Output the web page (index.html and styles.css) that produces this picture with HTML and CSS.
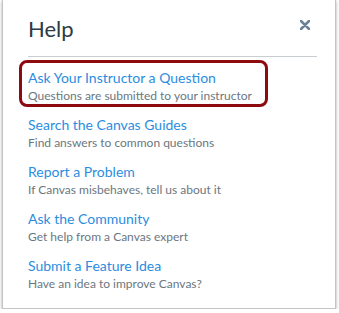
FILE: index.html
```html
<!DOCTYPE html>
<html lang="en">
<head>
    <meta charset="UTF-8">
    <title>Help</title>
    <link rel="stylesheet" href="styles.css">
</head>
<body>
    <div class="tray">
        <div class="tray-header">
            <h1>Help</h1>
            <button class="close" aria-label="Close">
                <svg width="10" height="10" viewBox="0 0 10 10">
                    <path d="M1 1 L9 9 M9 1 L1 9" stroke="#6b8196" stroke-width="2.5" stroke-linecap="round"/>
                </svg>
            </button>
        </div>

        <ul class="help-links">
            <li class="item highlight">
                <a href="#">Ask Your Instructor a Question</a>
                <div class="desc">Questions are submitted to your instructor</div>
            </li>
            <li class="item">
                <a href="#">Search the Canvas Guides</a>
                <div class="desc">Find answers to common questions</div>
            </li>
            <li class="item">
                <a href="#">Report a Problem</a>
                <div class="desc">If Canvas misbehaves, tell us about it</div>
            </li>
            <li class="item">
                <a href="#">Ask the Community</a>
                <div class="desc">Get help from a Canvas expert</div>
            </li>
            <li class="item">
                <a href="#">Submit a Feature Idea</a>
                <div class="desc">Have an idea to improve Canvas?</div>
            </li>
        </ul>
    </div>
</body>
</html>
```

FILE: styles.css
```css
body {
    margin: 0;
    background-color: #fff;
    font-family: Lato, "Open Sans", sans-serif;
}
.tray {
    margin-left: 2px;
    width: 334px;
    height: 309px;
    border: 1px solid #c4c4c4;
    border-top: none;
    box-shadow: 0 1px 3px rgba(0, 0, 0, 0.35);
    padding: 0 18px 0 25px;
    box-sizing: border-box;
    background-color: #fff;
}
.tray-header {
    display: flex;
    justify-content: space-between;
    align-items: flex-start;
    padding: 15px 0 14px;
    border-bottom: 1px solid #c7cdd1;
}
.tray-header h1 {
    margin: 0;
    font-size: 22px;
    font-weight: 400;
    line-height: 27px;
    color: #2d3b45;
}
.close {
    background: none;
    border: none;
    padding: 0;
    margin: 5px 7px 0 0;
    line-height: 0;
    cursor: pointer;
}
.help-links {
    list-style: none;
    margin: 3px 0 0 -9px;
    padding: 0;
}
.item {
    width: fit-content;
    padding: 5px 13px 0 6px;
    border: 3px solid transparent;
    border-radius: 8px;
}
.item.highlight {
    border-color: #8d0b0f;
}
.item a {
    display: block;
    font-size: 14px;
    line-height: 19px;
    color: #2b8de0;
    text-decoration: none;
}
.desc {
    font-size: 12px;
    line-height: 17px;
    color: #6b7780;
}
```
